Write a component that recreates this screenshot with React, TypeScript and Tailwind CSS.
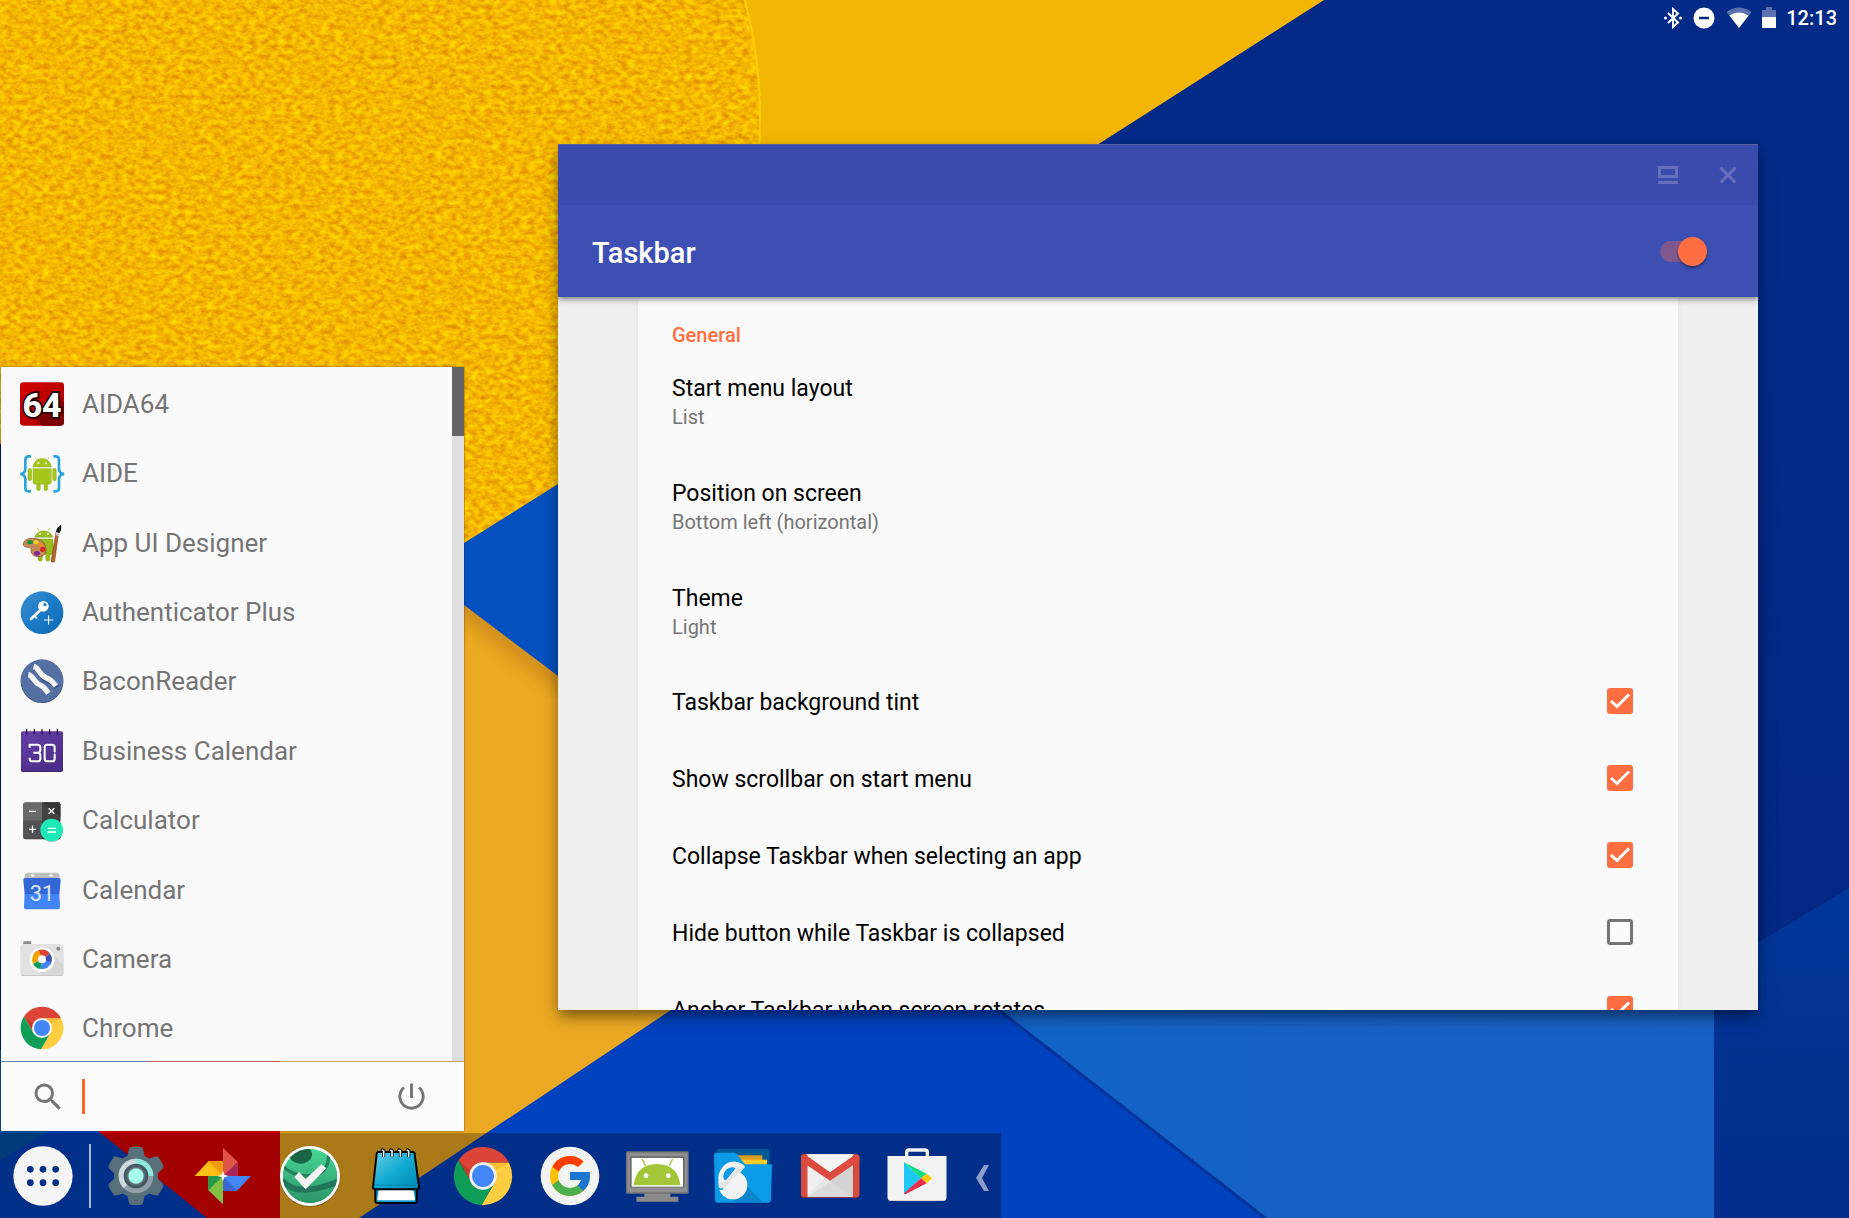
import React from "react";
import { FcGoogle } from "react-icons/fc";

type IconProps = { className?: string };

function Wallpaper() {
  return (
    <svg
      className="absolute inset-0 h-full w-full"
      viewBox="0 0 1849 1218"
      preserveAspectRatio="xMidYMid slice"
      aria-hidden="true"
    >
      <defs>
        <filter id="grain" x="0" y="0" width="100%" height="100%" colorInterpolationFilters="sRGB">
          <feTurbulence type="fractalNoise" baseFrequency="0.14 0.2" numOctaves="5" seed="7" result="n" />
          <feColorMatrix
            in="n"
            type="matrix"
            values="0.24 0 0 0 0.84  0.46 0 0 0 0.485  0 0 0 0 0.005  0 0 0 0 1"
          />
        </filter>
        <filter id="soft" x="-10%" y="-10%" width="120%" height="120%">
          <feGaussianBlur stdDeviation="9" />
        </filter>
        <clipPath id="disc">
          <circle cx="295" cy="118" r="466" />
        </clipPath>
        <clipPath id="amberClip">
          <path d="M464 605 L558 676 L700 784 V1218 H280 V605Z" />
        </clipPath>
        <linearGradient id="navy" x1="0" y1="0" x2="0" y2="1">
          <stop offset="0" stopColor="#042a88" />
          <stop offset="1" stopColor="#032682" />
        </linearGradient>
        <linearGradient id="azure" x1="0" y1="0" x2="1" y2="0">
          <stop offset="0" stopColor="#1262c6" />
          <stop offset="1" stopColor="#1960c4" />
        </linearGradient>
        <linearGradient id="deep" x1="0" y1="0" x2="0" y2="1">
          <stop offset="0" stopColor="#003799" />
          <stop offset="1" stopColor="#022d8c" />
        </linearGradient>
      </defs>
      <rect width="1849" height="1218" fill="#f4b604" />
      <g clipPath="url(#disc)">
        <rect width="770" height="600" filter="url(#grain)" />
      </g>
      <circle cx="295" cy="118" r="465" fill="none" stroke="#ffcd0a" strokeWidth="2" />
      <path d="M1324 0 L1097 145 V1218 H1849 V0Z" fill="url(#navy)" />
      <path d="M1849 888 L1600 1038 V1218 H1849Z" fill="url(#deep)" />
      <path d="M0 444 H330 V760 L180 1061 H0Z" fill="#001c7a" />
      <path d="M280 605 H700 V1218 H280Z" fill="#eca923" />
      <g clipPath="url(#amberClip)">
        <path d="M440 589 L570 687" stroke="#9a5a10" strokeWidth="14" opacity="0.5" filter="url(#soft)" />
      </g>
      <path d="M330 627 L464 543 L700 395 V784 L558 676 L464 605Z" fill="#0450be" />
      <path d="M0 1050 H156 L98 1131 L217 1218 H0Z" fill="#0042c0" />
      <path d="M0 1050 H156 L50 1131 L0 1160Z" fill="#0452a8" />
      <path d="M156 1050 H280 V1218 H207 L98 1131Z" fill="#e20000" />
      <path d="M671 1010 L359 1218 H1267 L1003 1010Z" fill="#0041be" />
      <path d="M1001 1010 L1267 1218 H1714 V1010Z" fill="url(#azure)" />
      <path d="M999 1010 L1265 1218" stroke="#002a80" strokeWidth="3" opacity="0.6" />
    </svg>
  );
}

/* ---------- start menu icons ---------- */

function Aida() {
  return (
    <svg viewBox="60 65 132 132" className="size-11 overflow-visible">
      <defs>
        <linearGradient id="aida" x1="0" y1="0" x2="1" y2="1">
          <stop offset="0" stopColor="#d20000" />
          <stop offset="1" stopColor="#a80000" />
        </linearGradient>
      </defs>
      <rect x="60" y="66" width="132" height="130" rx="10" fill="url(#aida)" />
      <path d="M98 168 L126 196 H182 Q192 196 192 186 V130 L172 96 L134 150Z" fill="#7d0000" />
      <text
        x="126" y="169" textAnchor="middle" fontFamily="Roboto, sans-serif" fontWeight="800" fontSize="102"
        fill="#fff" stroke="#1a0000" strokeWidth="10" paintOrder="stroke"
      >
        64
      </text>
    </svg>
  );
}

function Aide() {
  return (
    <svg viewBox="60 273 132 132" className="size-11 overflow-visible">
      <g fill="none" stroke="#2aa5dc" strokeWidth="8">
        <path d="M93 289 H86 Q76 289 76 300 V326 Q76 340 61 342 Q76 344 76 358 V384 Q76 394 86 394 H93" />
        <path d="M160 289 H167 Q177 289 177 300 V326 Q177 340 192 342 Q177 344 177 358 V384 Q177 394 167 394 H160" />
      </g>
      <g fill="#a4c71c" stroke="#7c9a14" strokeWidth="1">
        <path d="M99 321 A27 25 0 0 1 154 321Z" />
        <path d="M99 326 H154 V366 Q154 373 147 373 H106 Q99 373 99 366Z" />
        <rect x="84" y="325" width="11" height="37" rx="5" />
        <rect x="158" y="325" width="11" height="37" rx="5" />
        <rect x="110" y="370" width="11" height="22" rx="5" />
        <rect x="132" y="370" width="11" height="22" rx="5" />
      </g>
      <path d="M111 301 L106 292 M142 301 L147 292" stroke="#a4c71c" strokeWidth="2" />
      <circle cx="115" cy="310" r="3" fill="#fff" />
      <circle cx="138" cy="310" r="3" fill="#fff" />
    </svg>
  );
}

function UiDesigner() {
  return (
    <svg viewBox="60 481 132 132" className="size-11 overflow-visible">
      <g fill="#9cbd1e" stroke="#76921a" strokeWidth="1">
        <path d="M104 530 A28 24 0 0 1 159 530Z" />
        <path d="M104 535 H159 V575 Q159 582 152 582 H111 Q104 582 104 575Z" />
        <rect x="114" y="576" width="13" height="26" rx="6" />
        <rect x="137" y="576" width="13" height="26" rx="6" />
      </g>
      <path d="M116 511 L112 502 M146 511 L150 502" stroke="#9cbd1e" strokeWidth="2" />
      <circle cx="120" cy="520" r="3" fill="#fff" />
      <circle cx="144" cy="520" r="3" fill="#fff" />
      <path
        d="M70 550 Q72 533 98 533 Q128 534 137 556 Q143 583 121 588 Q99 590 93 574 Q96 562 86 560 Q70 560 70 550Z"
        fill="#c58a55" stroke="#7b4a22" strokeWidth="2"
      />
      <ellipse cx="90" cy="545" rx="9" ry="6" fill="#14903c" />
      <ellipse cx="108" cy="545" rx="8" ry="6" fill="#f0d020" />
      <ellipse cx="121" cy="553" rx="7" ry="6" fill="#f0901c" />
      <ellipse cx="128" cy="566" rx="8" ry="8" fill="#d8262a" />
      <ellipse cx="111" cy="578" rx="9" ry="7" fill="#7b2a9a" />
      <path d="M176 516 L164 602 Q158 608 153 602 L168 514Z" fill="#b5652a" stroke="#6f3a12" strokeWidth="1.5" />
      <path d="M169 512 L178 514 L177 526 L167 524Z" fill="#c9ccd0" />
      <path d="M183 493 Q186 508 178 517 L168 514 Q168 502 183 493Z" fill="#1b1b1b" />
    </svg>
  );
}

function Authenticator() {
  return (
    <svg viewBox="60 689 132 132" className="size-11 overflow-visible">
      <defs>
        <linearGradient id="auth" x1="0" y1="0" x2="1" y2="1">
          <stop offset="0" stopColor="#3d8fd0" />
          <stop offset="0.5" stopColor="#1b7bc6" />
          <stop offset="1" stopColor="#0f69b4" />
        </linearGradient>
      </defs>
      <circle cx="126" cy="757" r="64" fill="url(#auth)" />
      <circle cx="130" cy="738" r="16" fill="#fff" />
      <circle cx="135" cy="733" r="5" fill="#1b7bc6" />
      <path d="M124 746 L93 776" stroke="#fff" strokeWidth="8" strokeLinecap="round" />
      <path d="M105 768 L111 774" stroke="#fff" strokeWidth="6" />
      <path d="M132 779 H160 M146 765 V793" stroke="#fff" strokeWidth="3" />
    </svg>
  );
}

function Bacon() {
  return (
    <svg viewBox="60 897 132 132" className="size-11 overflow-visible">
      <circle cx="126" cy="965" r="64" fill="#3c5584" />
      <circle cx="126" cy="962" r="64" fill="#5470a2" />
      <path d="M100 920 C118 924 116 946 138 955 C156 960 160 968 168 978" fill="none" stroke="#33497a" strokeWidth="17" transform="translate(3 4)" />
      <path d="M101 919 C118 924 116 944 138 953 C156 960 160 968 168 978" fill="none" stroke="#f2f2f2" strokeWidth="16" />
      <path d="M85 944 C100 946 100 966 118 974 C136 982 138 990 145 1000" fill="none" stroke="#f2f2f2" strokeWidth="16" />
    </svg>
  );
}

function BusinessCalendar() {
  return (
    <svg viewBox="60 86 132 132" className="size-11 overflow-visible">
      <defs>
        <linearGradient id="biz" x1="0" y1="0" x2="0.6" y2="1">
          <stop offset="0" stopColor="#6540a8" />
          <stop offset="1" stopColor="#4c2c88" />
        </linearGradient>
      </defs>
      <rect x="63" y="95" width="126" height="120" rx="6" fill="#3a2170" />
      <rect x="63" y="93" width="126" height="119" rx="6" fill="url(#biz)" />
      <path d="M80 87 V103 M103 87 V103 M126 87 V103 M149 87 V103 M172 87 V103" stroke="#2c0f4e" strokeWidth="4" />
      <g fill="none" stroke="#fff" strokeWidth="6">
        <path d="M89 142 V133 H113 Q121 133 121 141 V149 Q121 157 113 157 H100 M113 157 Q121 157 121 165 V175 Q121 183 113 183 H97 Q89 183 89 175 V172" />
        <path d="M164 155 V141 Q164 133 156 133 H142 Q134 133 134 141 V175 Q134 183 142 183 H156 Q164 183 164 175 V161" />
      </g>
      <path d="M164 154 V162" stroke="#fff" strokeWidth="3" opacity="0.7" />
    </svg>
  );
}

function Calculator() {
  return (
    <svg viewBox="60 294 132 132" className="size-11 overflow-visible">
      <rect x="70" y="308" width="111" height="110" rx="6" fill="#3a3a3a" />
      <path d="M76 307 H126 V362 H70 V313 Q70 307 76 307Z" fill="#6a6a6a" />
      <path d="M126 307 H175 Q181 307 181 313 V362 H126Z" fill="#424242" />
      <path d="M70 362 H126 V416 H76 Q70 416 70 410Z" fill="#525252" />
      <path d="M126 307 L181 352 V313 Q181 307 175 307Z" fill="#363636" />
      <circle cx="155" cy="393" r="34" fill="#0003" />
      <circle cx="155" cy="390" r="34" fill="#1de9b6" />
      <g stroke="#fff" strokeWidth="4">
        <path d="M87 334 H108 M146 325 L163 341 M163 325 L146 341 M87 388 H108 M97.500 377 V399 M142 385 H168 M142 396 H168" />
      </g>
    </svg>
  );
}

function GCalendar() {
  return (
    <svg viewBox="60 502 132 132" className="size-11 overflow-visible">
      <path d="M82 516 H170 Q177 516 178 524 L180 540 H72 L75 524 Q76 516 82 516Z" fill="#bdbdbd" />
      <circle cx="98" cy="524" r="5" fill="#f5f5f5" />
      <circle cx="153" cy="524" r="5" fill="#f5f5f5" />
      <path d="M74 577 H178 L180 618 Q180 626 172 626 H80 Q72 626 72 618Z" fill="#4285f4" />
      <path d="M70 540 Q69 532 77 532 H175 Q183 532 182 540 L178 580 H74Z" fill="#3367d6" />
      <text x="126" y="602" textAnchor="middle" fontFamily="Roboto, sans-serif" fontSize="66" fill="#dde8fb">31</text>
    </svg>
  );
}

function CameraIcon() {
  return (
    <svg viewBox="60 710 132 132" className="size-11 overflow-visible">
      <rect x="70" y="723" width="24" height="14" rx="4" fill="#8a8a8a" />
      <rect x="62" y="734" width="128" height="93" rx="7" fill="#c9c9c9" />
      <rect x="62" y="731" width="128" height="93" rx="7" fill="#e2e2e2" />
      <path d="M152 756 L190 794 V817 Q190 824 183 824 H128 L102 802Z" fill="#d6d6d6" />
      <circle cx="175" cy="745" r="6" fill="#8a8a8a" />
      <circle cx="126" cy="778" r="37" fill="#fff" />
      <path d="M126 777 L101 762 A29 29 0 0 1 150 760Z" fill="#db4437" />
      <path d="M126 777 L150 760 A29 29 0 0 1 150 794Z" fill="#3f51b5" />
      <path d="M126 777 L154 786 A29 29 0 0 1 122 806Z" fill="#4285f4" />
      <path d="M126 777 L122 806 A29 29 0 0 1 99 790Z" fill="#0f9d58" />
      <path d="M126 777 L99 790 A29 29 0 0 1 117 750Z" fill="#f4a400" />
      <circle cx="126" cy="777" r="12" fill="#fff" />
    </svg>
  );
}

function ChromeIcon({ className }: IconProps) {
  return (
    <svg viewBox="-1.030 -1.030 2.060 2.060" className={className}>
      <path d="M-.046 .999 A1 1 0 0 0 .888 -.46 L0 -.46 L.398 .23Z" fill="#ffcd40" />
      <path d="M.888 -.46 A1 1 0 0 0 -.842 -.539 L-.398 .23 L0 -.46Z" fill="#db4437" />
      <path d="M-.842 -.539 A1 1 0 0 0 -.046 .999 L.398 .23 L-.398 .23Z" fill="#0f9d58" />
      <path d="M-.842 -.539 L-.398 .23 L-.42 -.2Z" fill="#a52714" opacity=".35" />
      <path d="M0 -.46 H.888 L.42 -.2Z" fill="#e0a020" opacity=".35" />
      <circle r=".47" fill="#f4f4f4" />
      <circle r=".375" fill="#4285f4" />
    </svg>
  );
}

/* ---------- taskbar icons ---------- */

function AppsIcon() {
  return (
    <svg viewBox="40 287 180 180" className="size-15">
      <circle cx="130" cy="377" r="89" fill="#f5f5f5" />
      <g fill="#003088">
        <circle cx="92" cy="357" r="10" />
        <circle cx="130" cy="357" r="10" />
        <circle cx="168" cy="357" r="10" />
        <circle cx="92" cy="397" r="10" />
        <circle cx="130" cy="397" r="10" />
        <circle cx="168" cy="397" r="10" />
      </g>
    </svg>
  );
}

const teeth = [0, 60, 120, 180, 240, 300];

function SettingsIcon() {
  return (
    <svg viewBox="322 287 180 180" className="size-15 overflow-visible">
      <g fill="#566f7b">
        <circle cx="412" cy="377" r="66" />
        {teeth.map((a) => (
          <path key={a} d="M384 326 L391 297 Q393 290 399 290 H425 Q431 290 433 297 L440 326Z" transform={`rotate(${a} 412 377)`} />
        ))}
      </g>
      <circle cx="412" cy="377" r="52" fill="#90a0a8" />
      <path d="M412 325 A52 52 0 0 1 464 377 H412Z" fill="#8fe8dc" />
      <path d="M412 325 A52 52 0 0 0 375 414 L412 377Z" fill="#cfd8dc" />
      <circle cx="412" cy="377" r="37" fill="#435761" />
      <circle cx="412" cy="377" r="29" fill="#5d7078" />
      <circle cx="412" cy="377" r="23" fill="#a4ffeb" />
    </svg>
  );
}

function PhotosIcon() {
  return (
    <svg viewBox="582 287 180 180" className="size-15">
      <path d="M672 292 L716 335 V377 H672Z" fill="#de5548" />
      <path d="M672 377 L716 335 V377Z" fill="#a8285c" />
      <path d="M587 377 L628 333 H672 V377Z" fill="#fbc016" />
      <path d="M628 333 H672 V377Z" fill="#f09a0c" />
      <path d="M672 462 L628 420 V377 H672Z" fill="#84bf45" />
      <path d="M628 377 H672 L628 420Z" fill="#259b4a" />
      <path d="M756 377 L714 421 H672 V377Z" fill="#4285f4" />
      <path d="M672 377 L714 421 H672Z" fill="#3a67d0" />
      <path d="M672 361 L676 373 L688 377 L676 381 L672 393 L668 381 L656 377 L668 373Z" fill="#fff" />
    </svg>
  );
}

function CheckIcon() {
  return (
    <svg viewBox="842 287 180 180" className="size-15 overflow-visible">
      <defs>
        <linearGradient id="ball" x1="0" y1="0" x2="0" y2="1">
          <stop offset="0" stopColor="#48d896" />
          <stop offset="1" stopColor="#2c9468" />
        </linearGradient>
        <clipPath id="ballClip">
          <circle cx="932" cy="377" r="82" />
        </clipPath>
      </defs>
      <circle cx="932" cy="379" r="91" fill="#0004" />
      <circle cx="932" cy="377" r="90" fill="#fff" />
      <g clipPath="url(#ballClip)">
        <circle cx="932" cy="377" r="82" fill="url(#ball)" />
        <ellipse cx="904" cy="312" rx="34" ry="28" fill="#1c6446" />
        <path d="M848 346 Q892 388 955 372 Q988 360 988 310" fill="none" stroke="#23805a" strokeWidth="10" />
        <path d="M848 390 Q892 444 1016 394" fill="none" stroke="#23755a" strokeWidth="18" />
      </g>
      <path d="M885 380 L899 365 L919 386 L966 342 L981 354 L919 417Z" fill="#f4f4f4" />
    </svg>
  );
}

function NotepadIcon() {
  return (
    <svg viewBox="1101 287 180 180" className="size-15">
      <defs>
        <linearGradient id="pad" x1="0" y1="0" x2="1" y2="1">
          <stop offset="0" stopColor="#6ad0ea" />
          <stop offset="0.5" stopColor="#12aad2" />
          <stop offset="1" stopColor="#0088b4" />
        </linearGradient>
      </defs>
      <path d="M1129 410 H1253 V452 Q1253 458 1247 458 H1136 Q1129 458 1129 452Z" fill="#10a0cc" stroke="#000" strokeWidth="6" />
      <path d="M1140 416 H1242 L1248 446 Q1248 450 1242 450 H1140 Q1134 450 1135 446Z" fill="#fff" />
      <path d="M1139 305 H1241 Q1247 305 1247 311 L1260 410 Q1260 417 1253 417 H1129 Q1122 417 1122 410 L1133 311 Q1133 305 1139 305Z" fill="url(#pad)" stroke="#000" strokeWidth="6" />
      <path d="M1124 404 H1258" stroke="#0086ae" strokeWidth="3" />
      <g fill="none" strokeLinecap="round">
        <path d="M1154 316 V301 L1150 299 M1179 316 V301 L1175 299 M1204 316 V301 L1200 299 M1229 316 V301 L1225 299" stroke="#000" strokeWidth="10" />
        <path d="M1154 318 V302 L1150 300 M1179 318 V302 L1175 300 M1204 318 V302 L1200 300 M1229 318 V302 L1225 300" stroke="#e6f6fb" strokeWidth="5" />
      </g>
    </svg>
  );
}

function GoogleIcon() {
  return (
    <svg viewBox="122 287 180 180" className="size-15">
      <circle cx="212" cy="377" r="88" fill="#f3f3f3" />
      <FcGoogle x="140" y="305" size="144" />
    </svg>
  );
}

function MonitorIcon() {
  return (
    <svg viewBox="382 287 180 180" className="size-15 overflow-visible">
      <path d="M434 428 H512 V439 H536 V454 H410 V439 H434Z" fill="#8a8a8a" />
      <rect x="379" y="303" width="188" height="127" rx="4" fill="#757575" />
      <rect x="383" y="307" width="180" height="119" rx="2" fill="#8e8e8e" />
      <rect x="391" y="318" width="164" height="93" fill="#6b6b6b" />
      <rect x="396" y="323" width="154" height="86" fill="#fff" />
      <path d="M402 405 Q408 343 472 341 Q536 343 542 405Z" fill="#a3c639" />
      <path d="M438 347 L427 326 M508 347 L519 326" stroke="#a3c639" strokeWidth="4" />
      <circle cx="439" cy="376" r="7" fill="#fff" />
      <circle cx="506" cy="376" r="7" fill="#fff" />
    </svg>
  );
}

function FolderIcon() {
  return (
    <svg viewBox="642 287 180 180" className="size-15">
      <path d="M660 296 H804 Q812 296 812 304 V350 H652 V304 Q652 296 660 296Z" fill="#005a96" />
      <path d="M716 315 H790 V345 H716Z" fill="#d99e1e" />
      <path d="M722 328 H804 V350 H722Z" fill="#ffc928" />
      <path d="M653 307 H704 Q710 307 714 312 L738 342 H819 L816 450 Q815 457 808 457 H656 Q648 457 648 450 L645 315 Q645 307 653 307Z" fill="#0b9ae6" />
      <path d="M740 404 L790 456 H700Z" fill="#0a84cc" />
      <circle cx="702" cy="404" r="43" fill="#f2f2f2" />
      <path
        d="M668 412 Q650 388 664 360 Q680 332 708 334 Q728 335 738 349 L698 398 L664 420Z"
        fill="#f2f2f2"
      />
      <path d="M674 385 Q670 368 684 356 Q698 346 710 354 L682 388 Q677 392 674 385Z" fill="#0b9ae6" />
      <path d="M738 349 L676 412 Q658 414 657 392 L668 396 Q676 398 682 390 L714 350Z" fill="#e4e4e4" />
      <path d="M660 413 Q664 420 672 414" stroke="#0b9ae6" strokeWidth="5" fill="none" />
    </svg>
  );
}

function GmailIcon() {
  return (
    <svg viewBox="902 287 180 180" className="size-15">
      <rect x="905" y="314" width="175" height="128" rx="9" fill="#b93429" />
      <rect x="905" y="312" width="175" height="128" rx="9" fill="#d54b3e" />
      <path d="M925 312 H1060 V440 H925Z" fill="#e6e6e6" />
      <path d="M925 440 L985 398 H1000 L1060 440Z" fill="#dadada" />
      <path d="M925 346 L992 392 L1060 346 V440Z" fill="#d3d3d3" />
      <path d="M925 346 L975 384 L925 434Z" fill="#efefef" />
      <path d="M920 312 H1065 L992 368Z" fill="#f4f4f4" />
      <path d="M905 322 Q906 312 916 312 L992 366 L1069 312 Q1079 312 1080 322 V332 L992 391 L905 332Z" fill="#dc4b3e" />
    </svg>
  );
}

function PlayIcon() {
  return (
    <svg viewBox="1162 287 180 180" className="size-15">
      <path d="M1221 318 V306 Q1221 299 1228 299 H1276 Q1283 299 1283 306 V318" fill="none" stroke="#f2f2f2" strokeWidth="10" />
      <path d="M1164 317 H1340 V442 Q1340 452 1330 452 H1174 Q1164 452 1164 442Z" fill="#c8c8c8" />
      <path d="M1164 317 H1340 V440 Q1340 450 1330 450 H1174 Q1164 450 1164 440Z" fill="#f2f2f2" />
      <path d="M1213 336 L1264 384 L1213 431Z" fill="#1fc8f4" />
      <path d="M1213 336 L1281 370 L1264 384Z" fill="#12dc84" />
      <path d="M1281 370 L1297 384 L1281 399 L1264 384Z" fill="#ffc800" />
      <path d="M1264 384 L1281 399 L1217 432 L1213 429Z" fill="#ef2b4c" />
    </svg>
  );
}

/* ---------- start menu ---------- */

const apps: { name: string; icon: React.ReactNode }[] = [
  { name: "AIDA64", icon: <Aida /> },
  { name: "AIDE", icon: <Aide /> },
  { name: "App UI Designer", icon: <UiDesigner /> },
  { name: "Authenticator Plus", icon: <Authenticator /> },
  { name: "BaconReader", icon: <Bacon /> },
  { name: "Business Calendar", icon: <BusinessCalendar /> },
  { name: "Calculator", icon: <Calculator /> },
  { name: "Calendar", icon: <GCalendar /> },
  { name: "Camera", icon: <CameraIcon /> },
  { name: "Chrome", icon: <ChromeIcon className="size-11" /> },
];

function StartMenu() {
  return (
    <section aria-label="Start menu" className="relative ml-px flex h-[764px] w-[463px] flex-col gap-px bg-[#a5a5a5]/60 shadow-[0_0_2px_rgba(0,0,0,0.6)]">
      <div className="flex min-h-0 flex-1 bg-[#fafafa]">
        <ul className="-mb-0.5 flex flex-1 flex-col pt-0.5">
          {apps.map((app) => (
            <li key={app.name} className="flex flex-1">
              <button type="button" className="flex w-full items-center gap-[18px] pl-[19px] text-left text-[26px] leading-8 text-[#757575]">
                {app.icon}
                {app.name}
              </button>
            </li>
          ))}
        </ul>
        <div className="w-3 bg-[#dedede]">
          <div className="h-[69px] bg-[#646464]" />
        </div>
      </div>
      <div className="flex h-[69px] items-center bg-[#fcfbfb] pr-[35px] pl-[29px]">
        <svg viewBox="0 0 24 24" className="size-9" fill="#757575" aria-hidden="true">
          <path d="M15.500 14h-.79l-.28-.27A6.471 6.471 0 0 0 16 9.500 6.500 6.500 0 1 0 9.500 16c1.610 0 3.090-.59 4.230-1.570l.27.28v.79l5 4.990L20.490 19l-4.990-5zm-6 0C7.010 14 5 11.990 5 9.500S7.010 5 9.500 5 14 7.010 14 9.500 11.990 14 9.500 14z" />
        </svg>
        <span className="ml-4 h-[35px] w-[3px] bg-[#ff6425]" />
        <input type="text" aria-label="Search apps" className="h-10 min-w-0 flex-1 bg-transparent text-[26px] text-[#212121] outline-none" />
        <button type="button" aria-label="Power">
          <svg viewBox="0 0 24 24" className="size-[35px]" fill="#757575" aria-hidden="true">
            <path d="M13 3h-2v10h2V3zm4.830 2.170l-1.420 1.420C17.990 7.860 19 9.810 19 12c0 3.870-3.130 7-7 7s-7-3.130-7-7c0-2.190 1.010-4.140 2.580-5.420L6.170 5.170C4.230 6.820 3 9.260 3 12c0 4.970 4.030 9 9 9s9-4.030 9-9c0-2.740-1.230-5.180-3.170-6.830z" />
          </svg>
        </button>
      </div>
    </section>
  );
}

/* ---------- settings window ---------- */

const choices = [
  { title: "Start menu layout", value: "List" },
  { title: "Position on screen", value: "Bottom left (horizontal)" },
  { title: "Theme", value: "Light" },
];

const toggles = [
  { title: "Taskbar background tint", on: true },
  { title: "Show scrollbar on start menu", on: true },
  { title: "Collapse Taskbar when selecting an app", on: true },
  { title: "Hide button while Taskbar is collapsed", on: false },
  { title: "Anchor Taskbar when screen rotates", on: true },
];

function SettingsWindow() {
  return (
    <section aria-label="Taskbar settings" className="absolute top-36 right-[91px] bottom-52 left-[558px] flex flex-col overflow-hidden bg-[#efefef] shadow-[0_7px_14px_-1px_rgba(0,0,0,0.5)]">
      <header className="relative text-white shadow-[0_2px_6px_rgba(0,0,0,0.5)]">
        <div className="flex h-[61px] items-center justify-end border-t border-[#5a5fae] bg-[#3b4bad] text-[#6870bc]">
          <button type="button" aria-label="Maximize" className="grid w-15 place-items-center">
            <svg viewBox="0 0 20 18" className="h-[18px] w-5" fill="none" stroke="currentColor" strokeWidth="3" aria-hidden="true">
              <path d="M1.500 1.500 H18.500 V10.500 H1.500Z M0 16.500 H20" />
            </svg>
          </button>
          <button type="button" aria-label="Close" className="grid w-15 place-items-center">
            <svg viewBox="0 0 18 18" className="size-[18px]" fill="none" stroke="currentColor" strokeWidth="3" aria-hidden="true">
              <path d="M1.500 1.500 L16.500 16.500 M16.500 1.500 L1.500 16.500" />
            </svg>
          </button>
        </div>
        <div className="flex h-[92px] items-center justify-between bg-[#3e4fb4] pr-[51px] pl-[34px]">
          <h1 className="pt-1 text-[29px] leading-10 font-medium">Taskbar</h1>
          <label className="relative flex h-[29px] w-12 items-center">
            <input type="checkbox" role="switch" defaultChecked aria-label="Enable Taskbar" className="ml-px h-[21px] w-10 appearance-none rounded-full bg-[#80588f]" />
            <span className="absolute right-0 size-[29px] rounded-full bg-[#ff6e40] shadow-[0_2px_3px_rgba(0,0,0,0.4)]" />
          </label>
        </div>
      </header>
      <div className="mx-20 min-h-0 flex-1 overflow-hidden bg-[#fafafa] shadow-[0_0_6px_rgba(0,0,0,0.05)]">
        <h2 className="h-[51px] pt-[26px] pl-[34px] text-[20px] leading-6 font-medium text-[#ff6e40]">General</h2>
        {choices.map((c) => (
          <button key={c.title} type="button" className="flex h-[105px] w-full flex-col pt-[27px] pl-[34px] text-left">
            <span className="text-[23px] leading-7 text-black">{c.title}</span>
            <span className="text-[20px] leading-7 text-[#757575]">{c.value}</span>
          </button>
        ))}
        {toggles.map((t) => (
          <label key={t.title} className="flex h-[77px] items-center justify-between pr-[45px] pb-0.5 pl-[34px] text-[23px] leading-7 text-black">
            <span className="pt-1">{t.title}</span>
            <span className="relative grid size-[26px]">
              <input type="checkbox" defaultChecked={t.on} className="peer size-[26px] appearance-none rounded-[3px] border-3 border-[#757575] checked:border-[#ff6e40] checked:bg-[#ff6e40]" />
              <svg viewBox="0 0 26 26" className="pointer-events-none absolute inset-0 hidden peer-checked:block" fill="none" stroke="#fff" strokeWidth="3" aria-hidden="true">
                <path d="M4 13 L10 18.500 L22 6.500" />
              </svg>
            </span>
          </label>
        ))}
      </div>
    </section>
  );
}

/* ---------- bars ---------- */

function StatusBar() {
  return (
    <div className="flex h-9 items-center justify-end pr-3 text-white">
      <svg viewBox="0 0 18 22" className="mr-[11px] h-[22px] w-[18px]" fill="none" stroke="#fff" strokeWidth="2" aria-hidden="true">
        <path d="M4 6 L14 15.500 L9 20 V2 L14 6.500 L4 16" />
        <circle cx="1.500" cy="11" r="1.500" fill="#fff" stroke="none" />
        <circle cx="16.500" cy="11" r="1.500" fill="#fff" stroke="none" />
      </svg>
      <svg viewBox="0 0 22 22" className="mr-[11px] size-[22px]" aria-hidden="true">
        <circle cx="11" cy="11" r="10.500" fill="#fff" />
        <path d="M6 11 H16" stroke="#04287f" strokeWidth="2.500" />
      </svg>
      <svg viewBox="0 0 26 22" className="mr-2.5 h-[22px] w-[26px]" aria-hidden="true">
        <path d="M13 21 L0.500 5 Q13 -4 25.500 5Z" fill="#fff" opacity="0.35" />
        <path d="M13 21 L3.500 8.500 Q13 2.500 22.500 8.500Z" fill="#fff" />
      </svg>
      <svg viewBox="0 0 14 22" className="mr-2.5 h-[22px] w-3.5" aria-hidden="true">
        <path d="M0 10 V3 H4 V0 H10 V3 H14 V10Z" fill="#fff" opacity="0.35" />
        <path d="M0 10 H14 V21 H0Z" fill="#fff" />
      </svg>
      <time className="text-[20px] leading-6 font-medium">12:13</time>
    </div>
  );
}

const pinned: { name: string; icon: React.ReactNode }[] = [
  { name: "Settings", icon: <SettingsIcon /> },
  { name: "Photos", icon: <PhotosIcon /> },
  { name: "Tasks", icon: <CheckIcon /> },
  { name: "Notepad", icon: <NotepadIcon /> },
  { name: "Chrome", icon: <ChromeIcon className="size-15" /> },
  { name: "Google", icon: <GoogleIcon /> },
  { name: "Remote desktop", icon: <MonitorIcon /> },
  { name: "File explorer", icon: <FolderIcon /> },
  { name: "Gmail", icon: <GmailIcon /> },
  { name: "Play Store", icon: <PlayIcon /> },
];

function Taskbar() {
  return (
    <nav aria-label="Taskbar" className="relative flex h-[85px] w-[1001px] items-center bg-black/28">
      <button type="button" aria-label="All apps" className="grid w-[86px] place-items-center">
        <AppsIcon />
      </button>
      <span className="ml-[3px] h-16 w-0.5 bg-[#a8b8d8]" />
      <div className="ml-0.5 grid flex-1 grid-cols-10">
        {pinned.map((p) => (
          <button key={p.name} type="button" aria-label={p.name} className="grid place-items-center">
            {p.icon}
          </button>
        ))}
      </div>
      <button type="button" aria-label="Collapse" className="grid w-[41px] place-items-center pt-1 pl-1">
        <svg viewBox="0 0 13 26" className="h-[26px] w-[13px]" fill="#8c9ecb" aria-hidden="true">
          <path d="M8 0 H13 L6 13 L13 26 H8 L0 13Z" />
        </svg>
      </button>
    </nav>
  );
}

export default function App() {
  return (
    <main className="relative flex h-screen flex-col overflow-hidden bg-[#0041be] font-['Roboto',sans-serif]">
      <Wallpaper />
      <div className="relative">
        <StatusBar />
      </div>
      <div className="relative mt-auto mb-0.5">
        <StartMenu />
      </div>
      <Taskbar />
      <SettingsWindow />
    </main>
  );
}
